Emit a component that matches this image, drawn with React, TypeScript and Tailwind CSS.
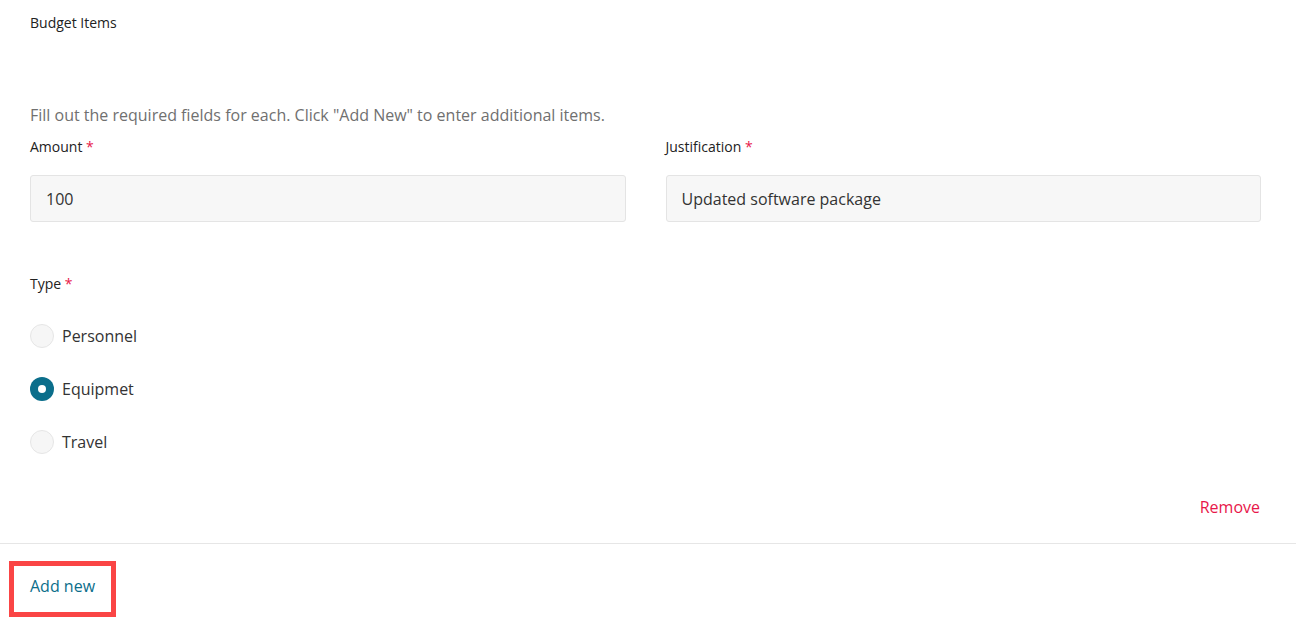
import React from "react";

const font = { fontFamily: '"Open Sans", "Noto Sans", sans-serif' };

function Radio({ label, checked }: { label: string; checked?: boolean }) {
  return (
    <div className="flex items-center h-[24px]">
      {checked ? (
        <span className="w-[24px] h-[24px] rounded-full bg-[#0b6e8b] flex items-center justify-center">
          <span className="w-[8px] h-[8px] rounded-full bg-white" />
        </span>
      ) : (
        <span className="w-[24px] h-[24px] rounded-full bg-[#f6f6f6] border border-[#e6e6e6]" />
      )}
      <span className="ml-[8px] text-[16px] leading-[24px] text-[#333]">{label}</span>
    </div>
  );
}

export default function App() {
  return (
    <div className="w-[1296px] h-[617px] bg-white overflow-hidden" style={font}>
      <div className="pl-[30px] pr-[35px] pt-[13px]">
        <div className="text-[14px] leading-[20px] text-[#222] font-[500]">Budget Items</div>
        <div className="mt-[70px] text-[16px] leading-[24px] text-[#707070]">
          Fill out the required fields for each. Click "Add New" to enter additional items.
        </div>
        <div className="mt-[10px] grid grid-cols-2 gap-x-[40px]">
          <div>
            <div className="text-[14px] leading-[20px] text-[#222] font-[500]">
              Amount <span className="text-[#e8174a]">*</span>
            </div>
            <div className="mt-[18px] h-[47px] rounded-[3px] border border-[#e4e4e4] bg-[#f7f7f7] px-[15px] flex items-center text-[16px] text-[#333]">
              100
            </div>
          </div>
          <div>
            <div className="text-[14px] leading-[20px] text-[#222] font-[500]">
              Justification <span className="text-[#e8174a]">*</span>
            </div>
            <div className="mt-[18px] h-[47px] rounded-[3px] border border-[#e4e4e4] bg-[#f7f7f7] px-[15px] flex items-center text-[16px] text-[#333]">
              Updated software package
            </div>
          </div>
        </div>
        <div className="mt-[52px] text-[14px] leading-[20px] text-[#222] font-[500]">
          Type <span className="text-[#e8174a]">*</span>
        </div>
        <div className="mt-[30px] flex flex-col gap-[29px]">
          <Radio label="Personnel" />
          <Radio label="Equipmet" checked />
          <Radio label="Travel" />
        </div>
        <div className="mt-[41px] flex justify-end">
          <span className="text-[16px] leading-[24px] text-[#e8174a] mr-[1px]">Remove</span>
        </div>
      </div>
      <div className="mt-[24px] h-px bg-[#e6e6e6]" />
      <div className="mt-[17px] ml-[9px] w-[107px] h-[56px] border-[5px] border-[#fa4545] pl-[16px] pt-[8px]">
        <span className="text-[16px] leading-[24px] text-[#0b6e8b] font-[500]">Add new</span>
      </div>
    </div>
  );
}
